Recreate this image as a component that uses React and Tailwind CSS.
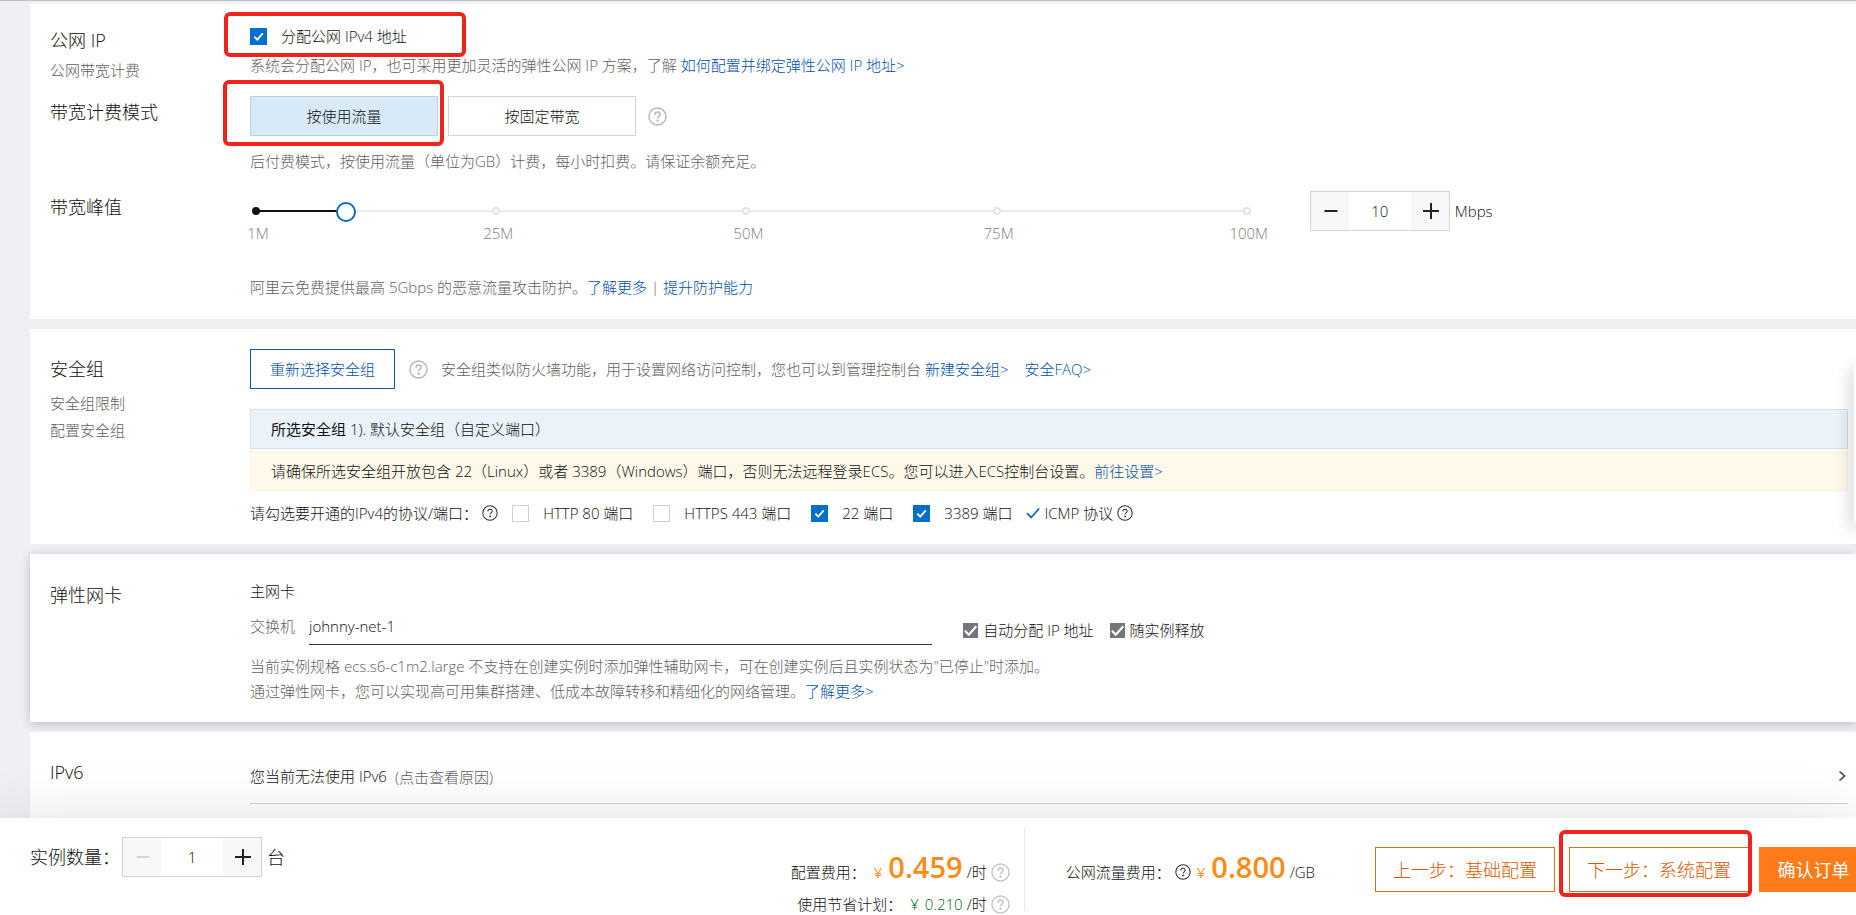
import React, { useState } from 'react';

const MARKS = [1, 25, 50, 75, 100];
const toPercent = (value) => ((value - 1) / 99) * 100;

const HelpIcon = ({ className = 'w-[19px] h-[19px] text-[#b4b4b4]', strokeWidth = 1.5 }) => (
  <svg viewBox="0 0 20 20" fill="none" stroke="currentColor" strokeWidth={strokeWidth} className={`shrink-0 ${className}`}>
    <circle cx="10" cy="10" r="9" />
    <path d="M7.3 8.1c0-1.7 1.2-2.8 2.7-2.8s2.7 1 2.7 2.5c0 1.9-2.6 2-2.6 4.1" />
    <circle cx="10.1" cy="14.3" r="0.5" fill="currentColor" />
  </svg>
);

const CheckMark = ({ className, strokeWidth = 2 }) => (
  <svg viewBox="0 0 16 16" fill="none" stroke="currentColor" strokeWidth={strokeWidth} className={className}>
    <path d="M2 8.2l4.2 4.3 8-9" />
  </svg>
);

const Link = ({ children, className = '' }) => (
  <a href="#" className={`text-[#0050a8] ${className}`}>{children}</a>
);

const Checkbox = ({ label, defaultChecked = false, className = '' }) => (
  <label className={`flex items-center gap-3.5 ${className}`}>
    <span className="relative flex">
      <input
        type="checkbox"
        defaultChecked={defaultChecked}
        className="peer appearance-none w-[17px] h-[17px] border border-[#d0d0d0] bg-white checked:border-[#0070cc] checked:bg-[#0070cc]"
      />
      <CheckMark className="absolute inset-0 w-[17px] h-[17px] p-[3px] text-white pointer-events-none hidden peer-checked:block" strokeWidth={2.8} />
    </span>
    {label}
  </label>
);

const GrayCheckbox = ({ label, className = '' }) => (
  <label className={`flex items-center gap-[5px] ${className}`}>
    <span className="relative flex">
      <input type="checkbox" defaultChecked className="peer appearance-none w-[15px] h-[15px] bg-[#ccc] checked:bg-[#737678]" />
      <CheckMark strokeWidth={2.2} className="absolute inset-0 w-[15px] h-[15px] text-white pointer-events-none hidden peer-checked:block" />
    </span>
    {label}
  </label>
);

const Stepper = ({ value, onChange, min, max, label }) => (
  <div className="flex w-[140px] h-10 border border-[#d0d3d8] bg-white shrink-0">
    <button
      type="button"
      aria-label="减少"
      disabled={value <= min}
      onClick={() => onChange(value - 1)}
      className="w-[38px] shrink-0 pl-0.5 flex items-center justify-center bg-[#f5f7f9] text-[#222] disabled:text-[#d4d4d4]"
    >
      <svg viewBox="0 0 16 16" className="w-4 h-4" stroke="currentColor" strokeWidth="2"><path d="M1.5 8h13" /></svg>
    </button>
    <input
      type="text"
      aria-label={label}
      value={value}
      onChange={(e) => onChange(Number(e.target.value) || min)}
      className="min-w-0 flex-1 text-center outline-none"
    />
    <button
      type="button"
      aria-label="增加"
      disabled={value >= max}
      onClick={() => onChange(value + 1)}
      className="w-[38px] shrink-0 pl-0.5 flex items-center justify-center bg-[#f5f7f9] text-[#222] disabled:text-[#d4d4d4]"
    >
      <svg viewBox="0 0 16 16" className="w-4 h-4" stroke="currentColor" strokeWidth="2"><path d="M0 8h16M8 0v16" /></svg>
    </button>
  </div>
);

// Red frame around the steps the user has to follow
const Highlight = ({ className }) => (
  <div className={`absolute border-4 border-[#ee251c] rounded-md pointer-events-none ${className}`} />
);

const Row = ({ title, links = [], className = '', children }) => (
  <div className={`flex ${className}`}>
    <div className="w-[200px] shrink-0 pt-0.5">
      <h3 className="text-lg leading-7">{title}</h3>
      {links.length > 0 && (
        <ul className="mt-1 flex flex-col gap-[3px]">
          {links.map((item) => (
            <li key={item}><a href="#" className="text-[#606060]">{item}</a></li>
          ))}
        </ul>
      )}
    </div>
    <div className="flex-1 min-w-0">{children}</div>
  </div>
);

const BandwidthSlider = ({ value, onChange }) => (
  <div className="relative w-[62%] ml-1.5 h-10">
    <div className="absolute inset-x-0 top-[19px] h-0.5 bg-[#ebebeb]" />
    <div className="absolute left-0 top-[19px] h-0.5 bg-[#111]" style={{ width: `${toPercent(value)}%` }} />
    {MARKS.map((mark) => (
      <React.Fragment key={mark}>
        <span
          className={`absolute top-4 w-2 h-2 -ml-1 rounded-full border-2 ${mark <= value ? 'bg-[#111] border-[#111]' : 'bg-white border-[#e3e3e3]'}`}
          style={{ left: `${toPercent(mark)}%` }}
        />
        <span className="absolute top-[30px] ml-0.5 -translate-x-1/2 text-[#808080]" style={{ left: `${toPercent(mark)}%` }}>
          {mark}M
        </span>
      </React.Fragment>
    ))}
    <input
      type="range"
      min="1"
      max="100"
      aria-label="带宽峰值"
      value={value}
      onChange={(e) => onChange(Number(e.target.value))}
      className="absolute -left-2.5 top-[11px] w-[calc(100%+20px)] h-5 appearance-none bg-transparent [&::-webkit-slider-thumb]:appearance-none [&::-webkit-slider-thumb]:w-5 [&::-webkit-slider-thumb]:h-5 [&::-webkit-slider-thumb]:rounded-full [&::-webkit-slider-thumb]:border-2 [&::-webkit-slider-thumb]:border-[#1268c0] [&::-webkit-slider-thumb]:bg-white"
    />
  </div>
);

const PublicIpSection = () => {
  const [billing, setBilling] = useState('traffic');
  const [bandwidth, setBandwidth] = useState(10);

  const modes = [
    { id: 'traffic', name: '按使用流量' },
    { id: 'fixed', name: '按固定带宽' },
  ];

  return (
    <section className="bg-white pt-5 pb-5 pl-5 pr-2">
      <Row title="公网 IP" links={['公网带宽计费']}>
        <div className="relative w-fit">
          <Checkbox label="分配公网 IPv4 地址" defaultChecked className="w-fit" />
          <Highlight className="-left-[26px] -top-3 w-[242px] h-[45px]" />
        </div>
        <p className="mt-[5px] text-[#606060]">
          系统会分配公网 IP，也可采用更加灵活的弹性公网 IP 方案，了解 <Link>如何配置并绑定弹性公网 IP 地址&gt;</Link>
        </p>
      </Row>

      <Row title="带宽计费模式" className="mt-3.5">
        <div className="relative flex items-center gap-2.5">
          {modes.map((mode) => (
            <button
              key={mode.id}
              type="button"
              onClick={() => setBilling(mode.id)}
              className={`w-[188px] h-10 border ${billing === mode.id ? 'bg-[#d8e9f7] border-[#b9cfe2]' : 'bg-white border-[#d2d4d8]'}`}
            >
              {mode.name}
            </button>
          ))}
          <HelpIcon className="ml-0.5 w-[19px] h-[19px] text-[#b4b4b4]" />
          <Highlight className="-left-[27px] -top-4 w-[221px] h-[66px]" />
        </div>
        <p className="mt-[13px] text-[#606060]">后付费模式，按使用流量（单位为GB）计费，每小时扣费。请保证余额充足。</p>
      </Row>

      <Row title="带宽峰值" className="mt-[18px]">
        <div className="flex items-center">
          <BandwidthSlider value={bandwidth} onChange={setBandwidth} />
          <div className="ml-[63px] flex items-center gap-[5px]">
            <Stepper value={bandwidth} onChange={setBandwidth} min={1} max={100} label="带宽" />
            Mbps
          </div>
        </div>
        <p className="mt-11 text-[#606060]">
          阿里云免费提供最高 5Gbps 的恶意流量攻击防护。<Link>了解更多</Link> | <Link>提升防护能力</Link>
        </p>
      </Row>
    </section>
  );
};

const SecurityGroupSection = () => (
  <section className="bg-white pt-5 pb-[19px] pl-5 pr-2">
    <Row title="安全组" links={['安全组限制', '配置安全组']} className="[&>div:first-child]:pt-1.5 [&_ul]:pt-1">
      <div className="flex items-center">
        <button type="button" className="w-[145px] h-10 border border-[#0b5cb0] text-[#0050a8]">重新选择安全组</button>
        <HelpIcon className="ml-3.5 w-[19px] h-[19px] text-[#b4b4b4]" />
        <p className="ml-[13px] text-[#606060]">
          安全组类似防火墙功能，用于设置网络访问控制，您也可以到管理控制台 <Link>新建安全组&gt;</Link>
        </p>
        <Link className="ml-4">安全FAQ&gt;</Link>
      </div>
      <div className="mt-5 h-10 px-5 flex items-center border border-[#d3e0ea] bg-[#eaf2fa]">
        <p><b>所选安全组</b> 1). 默认安全组（自定义端口）</p>
      </div>
      <div className="mt-0.5 h-10 px-5 flex items-center border border-[#fdf3dc] bg-[#fff9ea]">
        <p>
          请确保所选安全组开放包含 22（Linux）或者 3389（Windows）端口，否则无法远程登录ECS。您可以进入ECS控制台设置。<Link>前往设置&gt;</Link>
        </p>
      </div>
      <div className="mt-2.5 flex items-center">
        <span>请勾选要开通的IPv4的协议/端口：</span>
        <HelpIcon className="ml-1 w-4 h-4 text-[#333]" strokeWidth={1.3} />
        <Checkbox label="HTTP 80 端口" className="ml-3.5" />
        <Checkbox label="HTTPS 443 端口" className="ml-5" />
        <Checkbox label="22 端口" defaultChecked className="ml-5" />
        <Checkbox label="3389 端口" defaultChecked className="ml-5" />
        <CheckMark strokeWidth={1.8} className="ml-3 w-4 h-4 text-[#1b66b8]" />
        <span className="ml-1">ICMP 协议</span>
        <HelpIcon className="ml-1 w-4 h-4 text-[#333]" strokeWidth={1.3} />
      </div>
    </Row>
  </section>
);

const NetworkCardSection = () => (
  <section className="relative bg-white pt-[25px] pb-[18px] pl-5 pr-2 shadow-[0_2px_10px_rgba(0,0,0,0.22)]">
    <Row title="弹性网卡">
      <h4>主网卡</h4>
      <div className="mt-2 flex items-start">
        <label htmlFor="vswitch" className="pt-[3px] text-[#606060]">交换机</label>
        <input
          id="vswitch"
          type="text"
          defaultValue="johnny-net-1"
          className="ml-3.5 w-[39%] h-[34px] pb-1 border-b border-[#333] outline-none"
        />
        <GrayCheckbox label="自动分配 IP 地址" className="ml-[31px] mt-[7px]" />
        <GrayCheckbox label="随实例释放" className="ml-4 mt-[7px]" />
      </div>
      <p className="mt-[9px] leading-[25px] text-[#606060]">
        当前实例规格 ecs.s6-c1m2.large 不支持在创建实例时添加弹性辅助网卡，可在创建实例后且实例状态为"已停止"时添加。
        <br />
        通过弹性网卡，您可以实现高可用集群搭建、低成本故障转移和精细化的网络管理。<Link>了解更多&gt;</Link>
      </p>
    </Row>
  </section>
);

const Ipv6Section = () => (
  <section className="bg-white flex-1 pt-6 pl-5 pr-2">
    <Row title="IPv6">
      <div className="flex items-center border-b border-[#d0d2d4] pt-[7px] pb-3.5">
        <span>您当前无法使用 IPv6</span>
        <a href="#" className="ml-2 pt-0.5 text-[#606060]">(点击查看原因)</a>
        <button type="button" aria-label="展开" className="ml-auto mr-0.5 text-[#444]">
          <svg viewBox="0 0 8 12" className="w-2 h-3" fill="none" stroke="currentColor" strokeWidth="1.6"><path d="M1.5 1.5L6.5 6l-5 4.5" /></svg>
        </button>
      </div>
    </Row>
  </section>
);

const Footer = () => {
  const [count, setCount] = useState(1);

  return (
    <footer className="relative h-[97px] shrink-0 flex items-start bg-white pl-[30px] shadow-[0_0_60px_rgba(0,0,0,0.12)]">
      <div className="mt-[19px] flex items-center">
        <span className="w-[92px] text-lg">实例数量：</span>
        <Stepper value={count} onChange={setCount} min={1} max={100} label="实例数量" />
        <span className="ml-[5px] text-lg">台</span>
      </div>

      <div className="ml-auto mt-2.5 h-[83px] pr-3.5 border-r border-[#e8e8e8] flex flex-col items-end">
        <div className="mt-5 h-[38px] flex items-baseline">
          <span>配置费用：</span>
          <span className="ml-2 font-normal text-[#ff8a15]">¥</span>
          <span className="ml-1.5 text-[29px] leading-[38px] font-semibold text-[#ff8a15]">0.459</span>
          <span className="ml-1">/时</span>
          <HelpIcon className="ml-1 self-end mb-1 w-[19px] h-[19px] text-[#c4c4c4]" />
        </div>
        <div className="mt-1.5 flex items-center">
          <span>使用节省计划：</span>
          <span className="ml-2 text-[#006a30]">¥</span>
          <span className="ml-1.5 text-[#006a30]">0.210</span>
          <span className="ml-1">/时</span>
          <HelpIcon className="ml-1 w-[19px] h-[19px] text-[#c4c4c4]" />
        </div>
      </div>

      <div className="ml-[41px] mt-[30px] h-[38px] flex items-baseline">
        <span>公网流量费用：</span>
        <HelpIcon className="self-end mb-1.5 ml-1 w-4 h-4 text-[#333]" strokeWidth={1.3} />
        <span className="ml-1.5 font-normal text-[#ff8a15]">¥</span>
        <span className="ml-1.5 text-[29px] leading-[38px] font-semibold text-[#ff8a15]">0.800</span>
        <span className="ml-1">/GB</span>
      </div>

      <div className="ml-[60px] mt-[29px] flex shrink-0 text-lg">
        <button type="button" className="w-[180px] h-[45px] border border-[#dd6f16] text-[#dd5800]">上一步：基础配置</button>
        <div className="relative ml-3.5">
          <button type="button" className="w-[180px] h-[45px] border border-[#dd6f16] text-[#dd5800]">下一步：系统配置</button>
          <Highlight className="-left-2.5 -top-[17px] w-[193px] h-[67px]" />
        </div>
        <button type="button" className="ml-2.5 w-[97px] h-[45px] pl-3 bg-[#ff7a18] font-normal text-white">确认订单</button>
      </div>
    </footer>
  );
};

const App = () => (
  <div className="relative h-screen flex flex-col overflow-hidden bg-[#eff0f4] border-t border-[#c0bfc5] text-[15px] leading-6 font-light text-[#111] font-['Open_Sans','Noto_Sans_CJK_SC',sans-serif]">
    <main className="flex-1 min-h-0 flex flex-col gap-2.5 pl-[30px] pt-[3px]">
      <PublicIpSection />
      <SecurityGroupSection />
      <NetworkCardSection />
      <Ipv6Section />
    </main>
    <Footer />
    {/* Collapsed service panel at the window edge */}
    <aside className="absolute right-0 top-[366px] w-0.5 h-[156px] bg-white shadow-[0_4px_16px_2px_rgba(0,0,0,0.3)]" />
  </div>
);

export default App;
